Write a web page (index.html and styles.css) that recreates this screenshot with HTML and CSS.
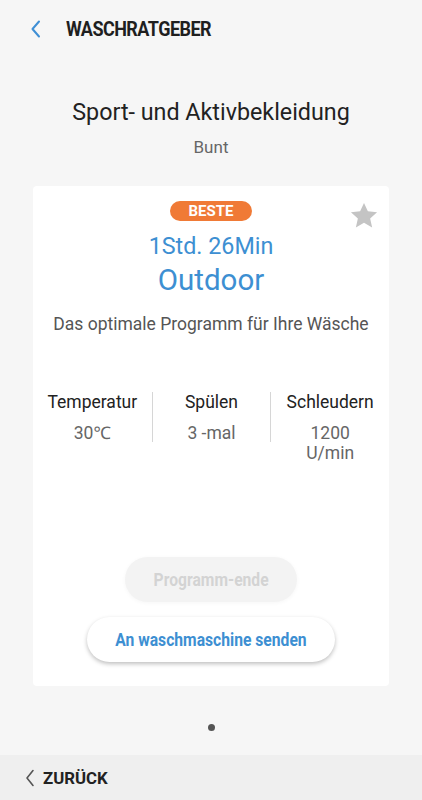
FILE: index.html
```html
<!DOCTYPE html>
<html lang="de">
<head>
    <meta charset="UTF-8">
    <meta name="viewport" content="width=device-width, initial-scale=1.0">
    <title>Waschratgeber</title>
    <link rel="stylesheet" href="styles.css">
</head>
<body>

    <div class="app">
        <div class="header">
            <svg class="back" width="12" height="18" viewBox="0 0 12 18">
                <path d="M9 1.5 L2.5 9 L9 16.5" fill="none" stroke="#3f8fd5" stroke-width="2" stroke-linecap="round" stroke-linejoin="round"/>
            </svg>
            <h1>WASCHRATGEBER</h1>
        </div>

        <div class="intro">
            <h2>Sport- und Aktivbekleidung</h2>
            <p>Bunt</p>
        </div>

        <div class="card">
            <svg class="star" width="32" height="32" viewBox="0 0 24 24">
                <path d="M12 2.2l2.9 6.3 6.9.7-5.2 4.6 1.5 6.8L12 17.1l-6.1 3.5 1.5-6.8L2.2 9.2l6.9-.7z" fill="#c4c4c4"/>
            </svg>
            <span class="badge">BESTE</span>
            <div class="duration">1Std. 26Min</div>
            <div class="program">Outdoor</div>
            <p class="desc">Das optimale Programm für Ihre Wäsche</p>

            <div class="stats">
                <div class="stat">
                    <div class="label">Temperatur</div>
                    <div class="value">30℃</div>
                </div>
                <div class="stat">
                    <div class="label">Spülen</div>
                    <div class="value">3 -mal</div>
                </div>
                <div class="stat">
                    <div class="label">Schleudern</div>
                    <div class="value">1200<br>U/min</div>
                </div>
            </div>

            <div class="actions">
                <button class="btn disabled"><span>Programm-ende</span></button>
                <button class="btn primary"><span>An waschmaschine senden</span></button>
            </div>
        </div>

        <div class="pager"><span class="dot"></span></div>

        <div class="footer">
            <svg width="10" height="18" viewBox="0 0 10 18">
                <path d="M8 1.5 L2 9 L8 16.5" fill="none" stroke="#555" stroke-width="1.6" stroke-linecap="round" stroke-linejoin="round"/>
            </svg>
            <span>ZURÜCK</span>
        </div>
    </div>

</body>
</html>
```

FILE: styles.css
```css
body {
    margin: 0;
    font-family: Roboto, 'Noto Sans', sans-serif;
    background: #f6f6f6;
    color: #222;
}
.app {
    width: 422px;
    height: 800px;
    display: flex;
    flex-direction: column;
}
.header {
    height: 58px;
    display: flex;
    align-items: center;
    padding-left: 30px;
}
.header .back {
    margin-right: 24px;
}
.header h1 {
    margin: 0;
    font-size: 20px;
    font-weight: 700;
    letter-spacing: -0.6px;
    transform: scaleX(0.9);
    transform-origin: left center;
    color: #1f1f1f;
}
.intro {
    text-align: center;
    padding-top: 38px;
}
.intro h2 {
    margin: 0;
    font-size: 23.3px;
    font-weight: 400;
    line-height: 32px;
}
.intro p {
    margin: 9px 0 0;
    font-size: 17px;
    line-height: 20px;
    color: #666;
}
.card {
    position: relative;
    margin: 29px 33px 0;
    height: 500px;
    background: #fff;
    border-radius: 4px;
    text-align: center;
    display: flex;
    flex-direction: column;
    align-items: center;
    padding-top: 15px;
    box-sizing: border-box;
}
.star {
    position: absolute;
    top: 14px;
    right: 9px;
}
.badge {
    display: inline-block;
    background: #f07a36;
    color: #fff;
    font-weight: 700;
    font-size: 15px;
    line-height: 20px;
    padding: 0 19px;
    border-radius: 10px;
}
.duration {
    margin-top: 12px;
    font-size: 23.3px;
    line-height: 27px;
    color: #3d8fd2;
}
.program {
    margin-top: 2px;
    font-size: 29.5px;
    line-height: 36px;
    color: #3d8fd2;
}
.desc {
    margin: 15px 0 0;
    font-size: 17.5px;
    line-height: 22px;
    color: #555;
}
.stats {
    margin-top: 57px;
    width: 100%;
    display: grid;
    grid-template-columns: 1fr 1fr 1fr;
}
.stat + .stat {
    border-left: 1px solid #d6d6d6;
}
.stat {
    height: 50px;
}
.label {
    font-size: 17.5px;
    line-height: 22px;
    margin-top: -1px;
}
.value {
    margin-top: 10px;
    font-size: 17.5px;
    line-height: 20px;
    color: #666;
}
.actions {
    margin-top: auto;
    margin-bottom: 24px;
    display: flex;
    flex-direction: column;
    align-items: center;
    gap: 15px;
}
.btn {
    font-family: Roboto, sans-serif;
    font-weight: 700;
    font-size: 18px;
    border: none;
    border-radius: 23px;
    height: 45px;
    padding: 0;
}
.btn span {
    display: inline-block;
    transform: scaleX(0.87);
}
.btn.disabled {
    width: 172px;
    background: #f3f3f3;
    color: #d3d3d3;
    box-shadow: 0 1px 4px rgba(0,0,0,0.04);
}
.btn.primary {
    width: 248px;
    background: #fff;
    color: #3d8fd2;
    box-shadow: 0 2px 4px rgba(0,0,0,0.25);
}
.pager {
    flex: 1;
    display: flex;
    justify-content: center;
    padding-top: 38px;
}
.dot {
    width: 7px;
    height: 7px;
    border-radius: 50%;
    background: #555;
}
.footer {
    height: 45px;
    background: #efefef;
    display: flex;
    align-items: center;
    padding-left: 25px;
    gap: 8px;
}
.footer span {
    font-size: 16.8px;
    font-weight: 700;
    color: #222;
}
```
